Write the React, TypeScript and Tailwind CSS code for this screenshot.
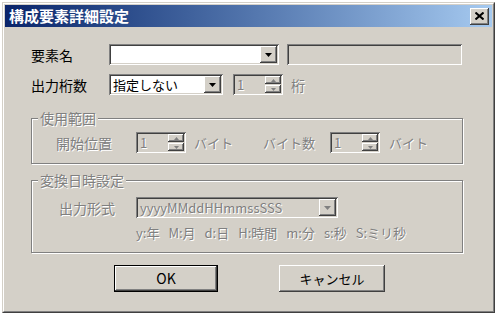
import React from "react";

// Win2000 style "構成要素詳細設定" dialog

const jp = "font-['MS_UI_Gothic','Noto_Sans_CJK_JP',sans-serif]";
const sunken =
  "shadow-[inset_1px_1px_#808080,inset_-1px_-1px_#ffffff,inset_2px_2px_#404040,inset_-2px_-2px_#d4d0c8]";
const raised =
  "shadow-[inset_-1px_-1px_#404040,inset_1px_1px_#ffffff,inset_-2px_-2px_#808080,inset_2px_2px_#d4d0c8]";
const grayText = "text-[#808080] [text-shadow:1px_1px_#ffffff]";

function Arrow({ disabled }: { disabled?: boolean }) {
  return (
    <div className={`flex h-[17px] w-[17px] items-center justify-center bg-[#d4d0c8] ${raised}`}>
      <svg width="7" height="4" viewBox="0 0 7 4">
        <polygon points="0,0 7,0 3.5,4" fill={disabled ? "#808080" : "#000000"} />
      </svg>
    </div>
  );
}

function Combo({ width, text, disabled }: { width: number; text?: string; disabled?: boolean }) {
  return (
    <div
      className={`flex h-[21px] items-center justify-between p-[2px] ${sunken} ${disabled ? "bg-[#d4d0c8]" : "bg-white"}`}
      style={{ width }}
    >
      <span className={`pl-[2px] text-[13px] leading-[17px] ${disabled ? grayText : "text-black"}`}>{text}</span>
      <Arrow disabled={disabled} />
    </div>
  );
}

function Spin() {
  return (
    <div className={`flex h-[21px] w-[50px] items-center justify-between bg-[#d4d0c8] p-[2px] ${sunken}`}>
      <span className={`pl-[2px] text-[13px] leading-[17px] ${grayText}`}>1</span>
      <div className="flex h-[17px] w-[16px] flex-col">
        <div className={`flex h-[8px] items-center justify-center bg-[#d4d0c8] ${raised}`}>
          <svg width="5" height="3" viewBox="0 0 5 3">
            <polygon points="2.5,0 5,3 0,3" fill="#808080" />
          </svg>
        </div>
        <div className={`mt-[1px] flex h-[8px] items-center justify-center bg-[#d4d0c8] ${raised}`}>
          <svg width="5" height="3" viewBox="0 0 5 3">
            <polygon points="0,0 5,0 2.5,3" fill="#808080" />
          </svg>
        </div>
      </div>
    </div>
  );
}

function Group({ title, height, children }: { title: string; height: number; children: React.ReactNode }) {
  return (
    <div
      className="relative ml-[26px] w-[432px] border border-[#808080] shadow-[1px_1px_#ffffff,inset_1px_1px_#ffffff]"
      style={{ height }}
    >
      <span className={`absolute -top-[10px] left-[6px] bg-[#d4d0c8] px-[2px] text-[14px] leading-[18px] ${grayText}`}>
        {title}
      </span>
      {children}
    </div>
  );
}

export default function App() {
  return (
    <div className={`h-[316px] w-[499px] bg-white pl-[2px] pt-[2px] ${jp}`}>
      <div className="flex h-[311px] w-[493px] flex-col border border-t-[#d4d0c8] border-l-[#d4d0c8] border-r-[#404040] border-b-[#404040] bg-[#d4d0c8]">
        <div className="flex h-full flex-col border border-t-white border-l-white border-r-[#808080] border-b-[#808080] px-[1px] pt-[1px]">
          {/* Title bar */}
          <div className="flex h-[22px] items-center justify-between bg-gradient-to-r from-[#0a246a] to-[#a6caf0] pl-[4px] pr-[3px]">
            <span className="text-[15px] font-bold leading-[18px] text-white">構成要素詳細設定</span>
            <div className={`flex h-[17px] w-[19px] items-center justify-center bg-[#d4d0c8] ${raised}`}>
              <svg width="9" height="8" viewBox="0 0 9 8">
                <path d="M0.5 0.5 L8.5 7.5 M8.5 0.5 L0.5 7.5" stroke="#000" strokeWidth="2" />
              </svg>
            </div>
          </div>

          {/* Row 1 */}
          <div className="mt-[17px] flex items-center pl-[26px]">
            <span className="w-[78px] text-[14px] leading-[18px] text-black">要素名</span>
            <Combo width={170} />
            <div className={`ml-[8px] h-[21px] w-[175px] bg-[#d4d0c8] ${sunken}`} />
          </div>

          {/* Row 2 */}
          <div className="mt-[9px] flex items-center pl-[26px]">
            <span className="w-[78px] text-[14px] leading-[18px] text-black">出力桁数</span>
            <Combo width={114} text="指定しない" />
            <div className="ml-[10px]">
              <Spin />
            </div>
            <span className={`ml-[8px] text-[14px] leading-[18px] ${grayText}`}>桁</span>
          </div>

          {/* 使用範囲 */}
          <div className="mt-[23px]">
            <Group title="使用範囲" height={46}>
              <div className="mt-[13px] flex items-center pl-[24px]">
                <span className={`w-[80px] text-[14px] leading-[18px] ${grayText}`}>開始位置</span>
                <Spin />
                <span className={`ml-[8px] w-[69px] text-[13px] leading-[18px] ${grayText}`}>バイト</span>
                <span className={`w-[67px] text-[13px] leading-[18px] ${grayText}`}>バイト数</span>
                <Spin />
                <span className={`ml-[9px] text-[13px] leading-[18px] ${grayText}`}>バイト</span>
              </div>
            </Group>
          </div>

          {/* 変換日時設定 */}
          <div className="mt-[16px]">
            <Group title="変換日時設定" height={73}>
              <div className="mt-[16px] flex items-center pl-[27px]">
                <span className={`w-[77px] text-[14px] leading-[18px] ${grayText}`}>出力形式</span>
                <Combo width={202} text="yyyyMMddHHmmssSSS" disabled />
              </div>
              <div className={`mt-[6px] flex gap-[9px] pl-[104px] text-[13px] leading-[18px] ${grayText}`}>
                <span>y:年</span>
                <span>M:月</span>
                <span>d:日</span>
                <span>H:時間</span>
                <span>m:分</span>
                <span>s:秒</span>
                <span>S:ミリ秒</span>
              </div>
            </Group>
          </div>

          {/* Buttons */}
          <div className="mt-[12px] flex justify-center gap-[61px] pl-[2px]">
            <div className="h-[27px] w-[104px] border border-black">
              <div className={`flex h-full items-center justify-center bg-[#d4d0c8] text-[14px] text-black ${raised}`}>
                OK
              </div>
            </div>
            <div
              className={`flex h-[27px] w-[106px] items-center justify-center bg-[#d4d0c8] text-[13px] text-black ${raised}`}
            >
              キャンセル
            </div>
          </div>
        </div>
      </div>
    </div>
  );
}
